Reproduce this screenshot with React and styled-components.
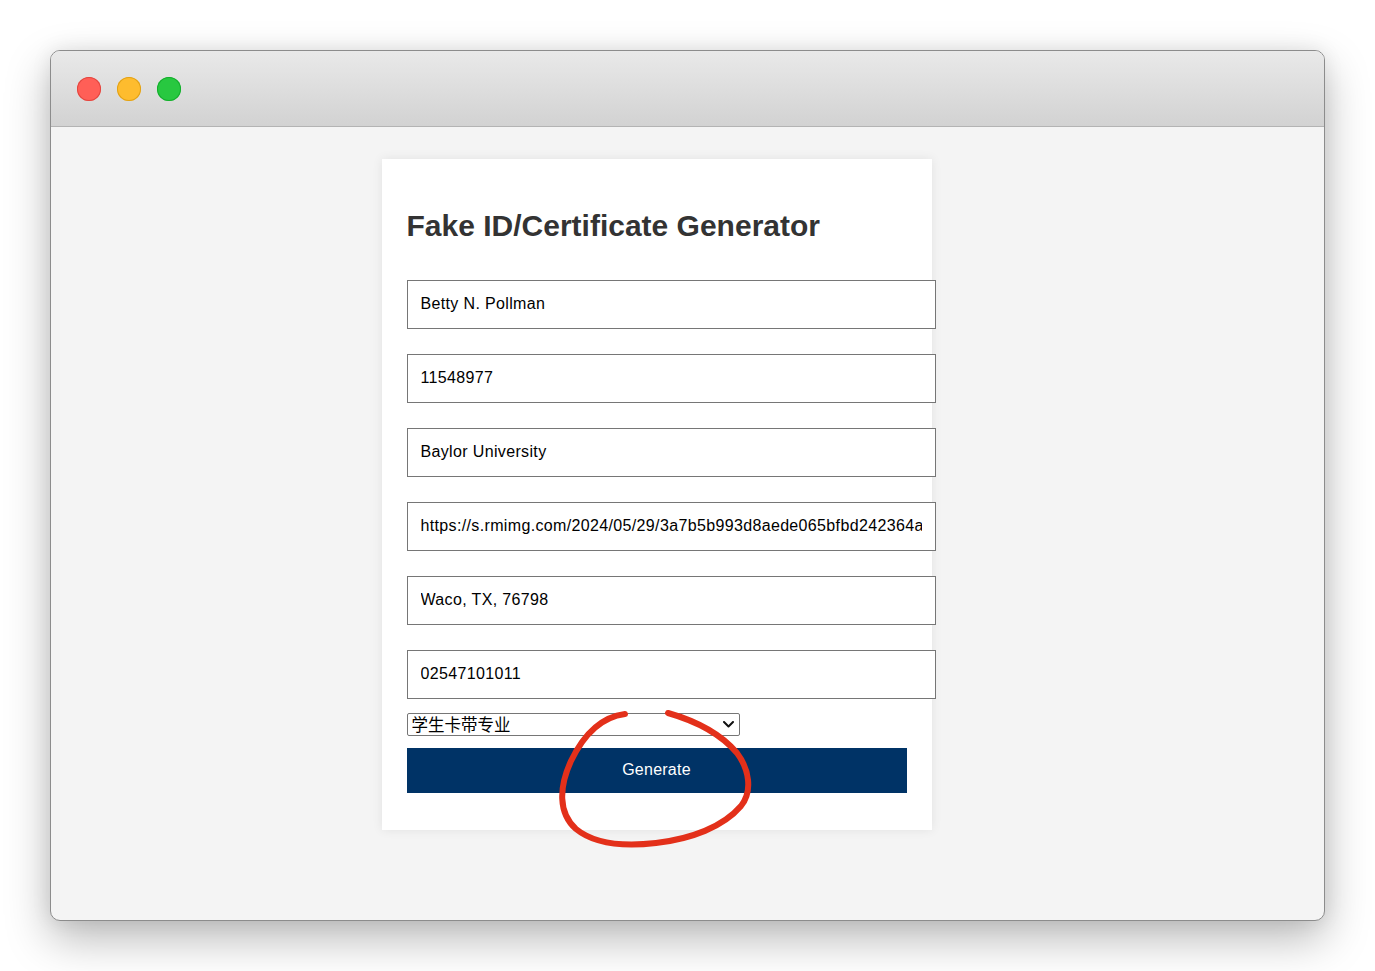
import React from "react";
import styled, { createGlobalStyle } from "styled-components";

const Global = createGlobalStyle`
  html, body { margin: 0; padding: 0; background: #ffffff; }
  body { font-family: "Liberation Sans", Arial, sans-serif; }
`;

const Page = styled.div`
  padding: 50px;
  width: 1375px;
  box-sizing: border-box;
`;

const Window = styled.div`
  position: relative;
  width: 1275px;
  height: 871px;
  box-sizing: border-box;
  border: 1px solid #8c8c8c;
  border-radius: 10px;
  background: #f4f4f4;
  overflow: hidden;
  box-shadow: 0 18px 45px rgba(0, 0, 0, 0.28), 0 0 20px rgba(0, 0, 0, 0.08);
  display: flex;
  flex-direction: column;
`;

const TitleBar = styled.div`
  height: 76px;
  flex: none;
  box-sizing: border-box;
  background: linear-gradient(#e9e9e9, #d2d2d2);
  border-bottom: 1px solid #b3b3b3;
  display: flex;
  align-items: center;
  gap: 16px;
  padding-left: 26px;
`;

const Light = styled.span`
  width: 24px;
  height: 24px;
  border-radius: 50%;
  background: ${(p) => p.$c};
  box-shadow: inset 0 0 0 1px ${(p) => p.$b};
`;

const Content = styled.div`
  flex: 1;
  display: flex;
  justify-content: center;
  padding-top: 32px;
  padding-right: 62px;
`;

const Card = styled.div`
  width: 500px;
  height: 621px;
  padding: 25px;
  background: #ffffff;
  box-shadow: 0 0 10px rgba(0, 0, 0, 0.08);
  align-self: flex-start;
`;

const Heading = styled.h2`
  margin: 25px 0 37px;
  font-size: 30px;
  font-weight: bold;
  color: #333333;
  font-family: "Liberation Sans", Arial, sans-serif;
  line-height: 1.117;
`;

const Input = styled.input`
  display: block;
  padding: 14px 13px;
  margin: 0 0 ${(p) => (p.$last ? "14px" : "25px")};
  border: 1px solid #767676;
  border-radius: 0;
  font-size: 16px;
  letter-spacing: 0.35px;
  font-family: "Liberation Sans", Arial, sans-serif;
  color: #000;
  background: #fff;
  outline: none;
  height: 49px;
  box-sizing: border-box;
  width: 529px;
`;

const SelectWrap = styled.div`
  position: relative;
  width: 333px;
  height: 23px;
  margin: 0 0 12px;
`;

const Select = styled.select`
  display: block;
  appearance: none;
  -webkit-appearance: none;
  box-sizing: border-box;
  width: 100%;
  height: 23px;
  padding: 0 22px 0 4px;
  margin: 0;
  border: 1px solid #767676;
  border-radius: 2px;
  font-size: 16.5px;
  line-height: 21px;
  font-family: "Noto Sans CJK SC", "Liberation Sans", sans-serif;
  color: #000;
  background: #fff;
  outline: none;
`;

const Chevron = styled.svg`
  position: absolute;
  right: 6px;
  top: 8px;
  pointer-events: none;
`;

const Button = styled.button`
  display: block;
  width: 500px;
  height: 45px;
  border: none;
  background: #003366;
  color: #ffffff;
  font-size: 16px;
  letter-spacing: 0.25px;
  font-family: "Liberation Sans", Arial, sans-serif;
  cursor: pointer;
`;

const Annotation = styled.svg`
  position: absolute;
  left: 0;
  top: 0;
  pointer-events: none;
`;

const fields = [
  "Betty N. Pollman",
  "11548977",
  "Baylor University",
  "https://s.rmimg.com/2024/05/29/3a7b5b993d8aede065bfbd242364a",
  "Waco, TX, 76798",
  "02547101011",
];

export default function App() {
  return (
    <>
      <Global />
      <Page>
        <Window>
          <TitleBar>
            <Light $c="#ff5f57" $b="#e2463f" />
            <Light $c="#febc2e" $b="#e1a116" />
            <Light $c="#28c840" $b="#14ae2c" />
          </TitleBar>
          <Content>
            <Card>
              <Heading>Fake ID/Certificate Generator</Heading>
              {fields.map((v, i) => (
                <Input
                  key={i}
                  type="text"
                  defaultValue={v}
                  $last={i === fields.length - 1}
                />
              ))}
              <SelectWrap>
                <Select defaultValue="a">
                  <option value="a">学生卡带专业</option>
                </Select>
                <Chevron width="11" height="7" viewBox="0 0 11 7">
                  <path
                    d="M1 1 L5.5 5.5 L10 1"
                    fill="none"
                    stroke="#111"
                    strokeWidth="2"
                    strokeLinecap="round"
                    strokeLinejoin="round"
                  />
                </Chevron>
              </SelectWrap>
              <Button type="button">Generate</Button>
            </Card>
          </Content>
          <Annotation width="1275" height="871" viewBox="50 50 1275 871">
            <path
              d="M624 713 C600 716 582 735 570 760 C558 786 557 812 575 828 C592 842 620 846 655 842 C690 838 722 826 740 805 C752 790 748 768 736 752 C720 733 695 720 667 712"
              fill="none"
              stroke="#e3301a"
              strokeWidth="6"
              strokeLinecap="round"
              strokeLinejoin="round"
            />
          </Annotation>
        </Window>
      </Page>
    </>
  );
}
